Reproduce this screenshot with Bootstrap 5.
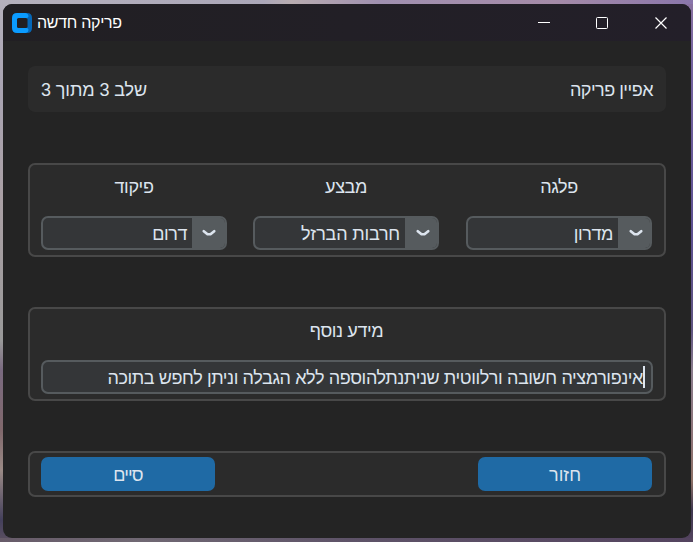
<!DOCTYPE html>
<html lang="he">
<head>
<meta charset="utf-8">
<meta name="viewport" content="width=device-width, initial-scale=1">
<title>פריקה חדשה</title>
<link href="https://cdn.jsdelivr.net/npm/bootstrap@5.3.0/dist/css/bootstrap.min.css" rel="stylesheet">
<style>
body{height:542px;overflow:hidden;padding:4px 2px 4px 3px;font-family:"Liberation Sans",Arial,sans-serif;font-size:18px;line-height:24px;letter-spacing:-.4px;color:#dce4ee;
background:linear-gradient(90deg,#b5b1bd,#aba7b8 38%,#b8ac b0 42%,#a090b0 55%,#a58ba8 80%,#8a76ab) 0 0/100% 4px no-repeat;
background:linear-gradient(90deg,#b5b1bd,#aba7b8 38%,#b8acb0 42%,#a090b0 55%,#a58ba8 80%,#8a76ab) 0 0/100% 4px no-repeat,
linear-gradient(90deg,#675b69,#706873 20%,#5e5368 50%,#54445f) 0 538px/100% 4px no-repeat,
linear-gradient(#b5b1bd 0,#a9a4b2 90px,#aaa0a5 200px,#999 340px,#7a6a80 370px,#80686c 430px,#9a8a86 470px,#44405c 520px,#5c5060 542px) 0 0/50% 100% no-repeat,
linear-gradient(#8a72a0 0,#7664a0 60px,#5d5090 230px,#5f5480 330px,#8a7c8c 370px,#8d7376 440px,#8c7066 480px,#403850 510px,#54445f 542px) 100% 0/50% 100% no-repeat}
.app-window{background:#242424;border-radius:9px;height:534px;overflow:hidden}
.titlebar{height:37px;background:linear-gradient(90deg,#211f23,#231f29);padding-left:9px;padding-right:23px;color:#fff}
.title-text{font-size:16px;margin-left:5px;letter-spacing:-.3px}
.win-controls{gap:45px}
.content{padding:25px 25px 0}
.panel{background:#2b2b2b;border-radius:7px}
.panel-line{border:2px solid #484848}
.panel-head{height:46px;padding:2px 13px 0;margin-bottom:51px}
.panel-head .step{letter-spacing:-.1px}
.panel-head .stage{letter-spacing:-.5px}
.panel-fields{height:94px;padding:0 12px 0 11px;margin-bottom:50px}
.field-row{gap:26px}
.field-row>:last-child{margin-left:1px}
.panel-actions{height:46px;padding:0 12px 0 11px}
.field-label{height:51px;padding-top:10px}
.combo{width:186px;height:34px;border:2px solid #565b5e;border-radius:7px;background:#343638;overflow:hidden}
.combo-arrow{width:32px;background:#565b5e;padding-left:3px}
.field-row>:first-child .combo-arrow{width:33px;padding-left:1px}
.combo-value{padding-right:5px;padding-top:4px}
.combo-value.wide{letter-spacing:-.2px}
.entry{height:34px;border:2px solid #565b5e;border-radius:7px;background:#343638;margin-right:-1px;padding-right:6px}
.entry-text{padding-top:2px}
.caret{width:2px;height:22px;background:#dce4ee}
.action{width:174px;height:34px;border:0;border-radius:7px;background:#1f6aa5;color:#dce4ee;font-size:18px;padding:0;line-height:36px}
.action:hover{background:#144870;color:#dce4ee}
.action.snug{letter-spacing:-.9px}
.action.loose{letter-spacing:0}
</style>
</head>
<body>
<div class="app-window">
  <header class="titlebar d-flex align-items-center">
    <svg width="20" height="20" viewBox="0 0 20 20" aria-hidden="true">
      <path d="M13 0H15Q20 0 20 5V15Q20 20 15 20H13Z" fill="#0567b8"/>
      <path d="M5 0H13.500Q16.500 .5 16.500 3.500L14.500 6H5.500V14H14.500L16.500 16.500Q16.500 19.500 13.500 20H5Q0 20 0 15V5Q0 0 5 0Z" fill="#0b9bff"/>
      <rect x="5" y="5" width="10.500" height="10" rx="1.500" fill="#211f23"/>
    </svg>
    <span class="title-text" dir="rtl">פריקה חדשה</span>
    <div class="win-controls d-flex ms-auto align-items-center">
      <svg width="14" height="14" viewBox="0 0 14 14"><path d="M2 6.500H14" stroke="#fff"/></svg>
      <svg width="14" height="14" viewBox="0 0 14 14"><rect x="1.500" y="1.500" width="11" height="11" rx="1" fill="none" stroke="#fff"/></svg>
      <svg width="14" height="14" viewBox="0 0 14 14"><path d="M1.500 1.500L12.500 12.500M12.500 1.500L1.500 12.500" stroke="#fff" stroke-width="1.200"/></svg>
    </div>
  </header>
  <main class="content">
    <div class="panel panel-head d-flex justify-content-between align-items-center">
      <span class="step" dir="rtl">שלב 3 מתוך 3</span>
      <span class="stage" dir="rtl">אפיין פריקה</span>
    </div>
    <section class="panel panel-line panel-fields field-row d-flex">
      <div>
        <div class="field-label text-center" dir="rtl">פיקוד</div>
        <div class="combo d-flex">
          <span class="combo-value flex-grow-1 text-end"><bdi>דרום</bdi></span>
          <span class="combo-arrow d-flex align-items-center justify-content-center"><svg width="14" height="8" viewBox="0 0 14 8"><path d="M1.800 2.200L5.500 5.300H8.500L12.200 2.200" fill="none" stroke="#dce4ee" stroke-width="2.600" stroke-linecap="round" stroke-linejoin="round"/></svg></span>
        </div>
      </div>
      <div>
        <div class="field-label text-center" dir="rtl">מבצע</div>
        <div class="combo d-flex">
          <span class="combo-value wide flex-grow-1 text-end"><bdi>חרבות הברזל</bdi></span>
          <span class="combo-arrow d-flex align-items-center justify-content-center"><svg width="14" height="8" viewBox="0 0 14 8"><path d="M1.800 2.200L5.500 5.300H8.500L12.200 2.200" fill="none" stroke="#dce4ee" stroke-width="2.600" stroke-linecap="round" stroke-linejoin="round"/></svg></span>
        </div>
      </div>
      <div>
        <div class="field-label text-center" dir="rtl">פלגה</div>
        <div class="combo d-flex">
          <span class="combo-value flex-grow-1 text-end"><bdi>מדרון</bdi></span>
          <span class="combo-arrow d-flex align-items-center justify-content-center"><svg width="14" height="8" viewBox="0 0 14 8"><path d="M1.800 2.200L5.500 5.300H8.500L12.200 2.200" fill="none" stroke="#dce4ee" stroke-width="2.600" stroke-linecap="round" stroke-linejoin="round"/></svg></span>
        </div>
      </div>
    </section>
    <section class="panel panel-line panel-fields">
      <div class="field-label text-center" dir="rtl">מידע נוסף</div>
      <div class="entry d-flex justify-content-end align-items-center">
        <span class="entry-text text-nowrap" dir="rtl">אינפורמציה חשובה ורלווטית שניתנתלהוספה ללא הגבלה וניתן לחפש בתוכה</span>
        <span class="caret"></span>
      </div>
    </section>
    <section class="panel panel-line panel-actions d-flex justify-content-between align-items-center">
      <button class="btn action snug" type="button">סיים</button>
      <button class="btn action loose" type="button">חזור</button>
    </section>
  </main>
</div>
<script src="https://cdn.jsdelivr.net/npm/bootstrap@5.3.0/dist/js/bootstrap.bundle.min.js"></script>
</body>
</html>
